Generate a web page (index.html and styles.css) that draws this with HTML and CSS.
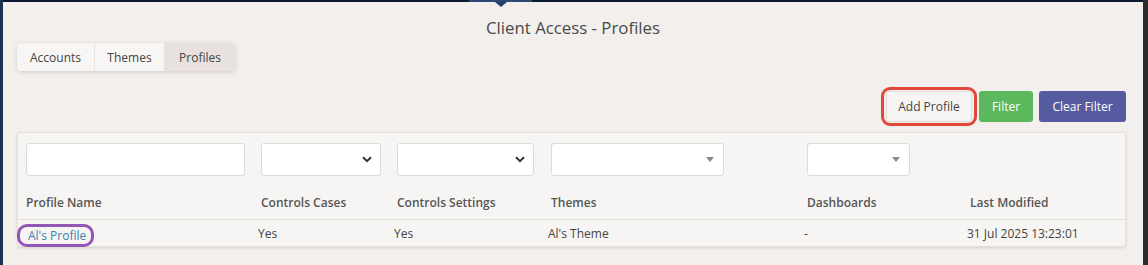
FILE: index.html
```html
<!DOCTYPE html>
<html>
<head>
<meta charset="utf-8">
<link rel="stylesheet" href="styles.css">
</head>
<body>
<div class="app">
  <div class="sidebar"></div>
  <div class="main">
    <div class="topbar"><span class="topbar-active"></span><span class="notch"></span></div>
    <h1 class="title">Client Access - Profiles</h1>
    <div class="tabs">
      <a class="tab">Accounts</a>
      <a class="tab">Themes</a>
      <a class="tab active">Profiles</a>
    </div>
    <div class="actions">
      <span class="ring-red"><button class="btn btn-default">Add Profile</button></span>
      <button class="btn btn-green">Filter</button>
      <button class="btn btn-purple">Clear Filter</button>
    </div>
    <div class="card">
      <div class="grid filters">
        <div><input class="field field-text" type="text"></div>
        <div><div class="field sel chev w119"><svg width="10" height="7" viewBox="0 0 10 7"><path d="M1 1.2 5 5.2 9 1.2" fill="none" stroke="#333" stroke-width="2"/></svg></div></div>
        <div><div class="field sel chev w136"><svg width="10" height="7" viewBox="0 0 10 7"><path d="M1 1.2 5 5.2 9 1.2" fill="none" stroke="#333" stroke-width="2"/></svg></div></div>
        <div><div class="field sel tri w172"><span class="caret"></span></div></div>
        <div><div class="field sel tri w102"><span class="caret"></span></div></div>
        <div></div>
      </div>
      <div class="grid head">
        <div>Profile Name</div>
        <div>Controls Cases</div>
        <div>Controls Settings</div>
        <div>Themes</div>
        <div>Dashboards</div>
        <div>Last Modified</div>
      </div>
      <div class="grid row">
        <div><a class="link ring-purple">Al's Profile</a></div>
        <div>Yes</div>
        <div>Yes</div>
        <div>Al's Theme</div>
        <div>-</div>
        <div>31 Jul 2025 13:23:01</div>
      </div>
    </div>
  </div>
  <div class="scrollbar"></div>
</div>
</body>
</html>
```

FILE: styles.css
```css
* { box-sizing: border-box; }
html, body { margin: 0; padding: 0; }
body {
  font-family: "Open Sans", "Liberation Sans", sans-serif;
  font-size: 12px;
  color: #444;
  background: #f2efec;
}
.app { display: flex; height: 265px; }
.sidebar { width: 3px; background: #1c3253; flex: none; }
.scrollbar { width: 5px; background: #2b2b2b; flex: none; }
.main { flex: 1; position: relative; padding: 0 17px 0 14px; }
.topbar { height: 2px; background: #0c1a31; margin: 0 -17px 0 -14px; position: relative; }
.topbar-active { position: absolute; left: 466px; width: 63px; top: 0; height: 2px; background: #2b4a73; }
.notch {
  position: absolute; left: 492px; top: 2px;
  width: 0; height: 0;
  border-left: 6px solid transparent; border-right: 6px solid transparent;
  border-top: 5px solid #22406a;
}
.title {
  margin: 0; padding-top: 15px;
  text-align: center; font-weight: 400; font-size: 16.8px; line-height: 22px;
  color: #4a4a4a;
  padding-left: 3px;
}
.tabs {
  display: inline-flex; margin-top: 4px; height: 28px;
  border-radius: 4px; overflow: hidden;
  box-shadow: 0 1px 4px rgba(0,0,0,0.15);
}
.tab {
  display: flex; align-items: center; justify-content: center;
  background: #f8f6f4; color: #444; font-size: 12px;
  border-right: 1px solid #ebe4e0;
}
.tab:nth-child(1) { width: 78px; }
.tab:nth-child(2) { width: 70px; }
.tab.active { width: 70px; background: #e8e1dd; border-right: 0; }
.actions {
  display: flex; justify-content: flex-end;
  margin-top: 20px; height: 31px; align-items: center;
}
.btn {
  font-family: inherit; font-size: 12px; border-radius: 3px; height: 31px;
  border: 1px solid transparent; padding: 0; cursor: pointer; white-space: nowrap;
}
.btn-default { background: #f7f5f3; color: #444; border-color: #e2ddd9; width: 86px; }
.btn-green { background: #5cb85c; color: #fff; width: 54px; margin-left: 2px; }
.btn-purple { background: #565b9f; color: #fff; width: 87px; margin-left: 6px; }
.ring-red {
  display: inline-flex; border: 3px solid #e0483a; border-radius: 9px; padding: 1px 2px;
  margin: -4px 0;
}
.card {
  margin-top: 10px; background: #f7f5f3; border: 1px solid #e3dfdb;
  border-radius: 3px; box-shadow: 0 1px 3px rgba(0,0,0,0.12);
  padding: 10px 0 0 0; height: 115px;
}
.grid {
  display: grid;
  grid-template-columns: 235px 136px 154px 256px 163px 1fr;
  padding-left: 8px;
}
.field {
  height: 33px; background: #fff; border: 1px solid #dedad6; border-radius: 3px;
}
.field-text { width: 219px; display: block; }
.sel { display: flex; align-items: center; justify-content: flex-end; padding-right: 8px; }
.w119 { width: 120px; }
.w136 { width: 137px; }
.w172 { width: 173px; }
.w102 { width: 103px; }
.caret {
  width: 0; height: 0; margin-right: 1px;
  border-left: 4px solid transparent; border-right: 4px solid transparent;
  border-top: 5px solid #888;
}
.head {
  margin-top: 18px; font-weight: 600; color: #555; font-size: 12px;
  line-height: 18px; padding-bottom: 7px;
  border-bottom: 1px solid #e5e1dd;
}
.row {
  padding-left: 5px; line-height: 18px; padding-top: 5px; color: #444; font-size: 12px;
}
.link { color: #3b7eb0; text-decoration: none; }
.ring-purple {
  display: inline-block; border: 3px solid #9257b5; border-radius: 10px;
  padding: 0 5px 0 8px; margin-left: -6px; margin-top: -1px; line-height: 17px;
}
```
